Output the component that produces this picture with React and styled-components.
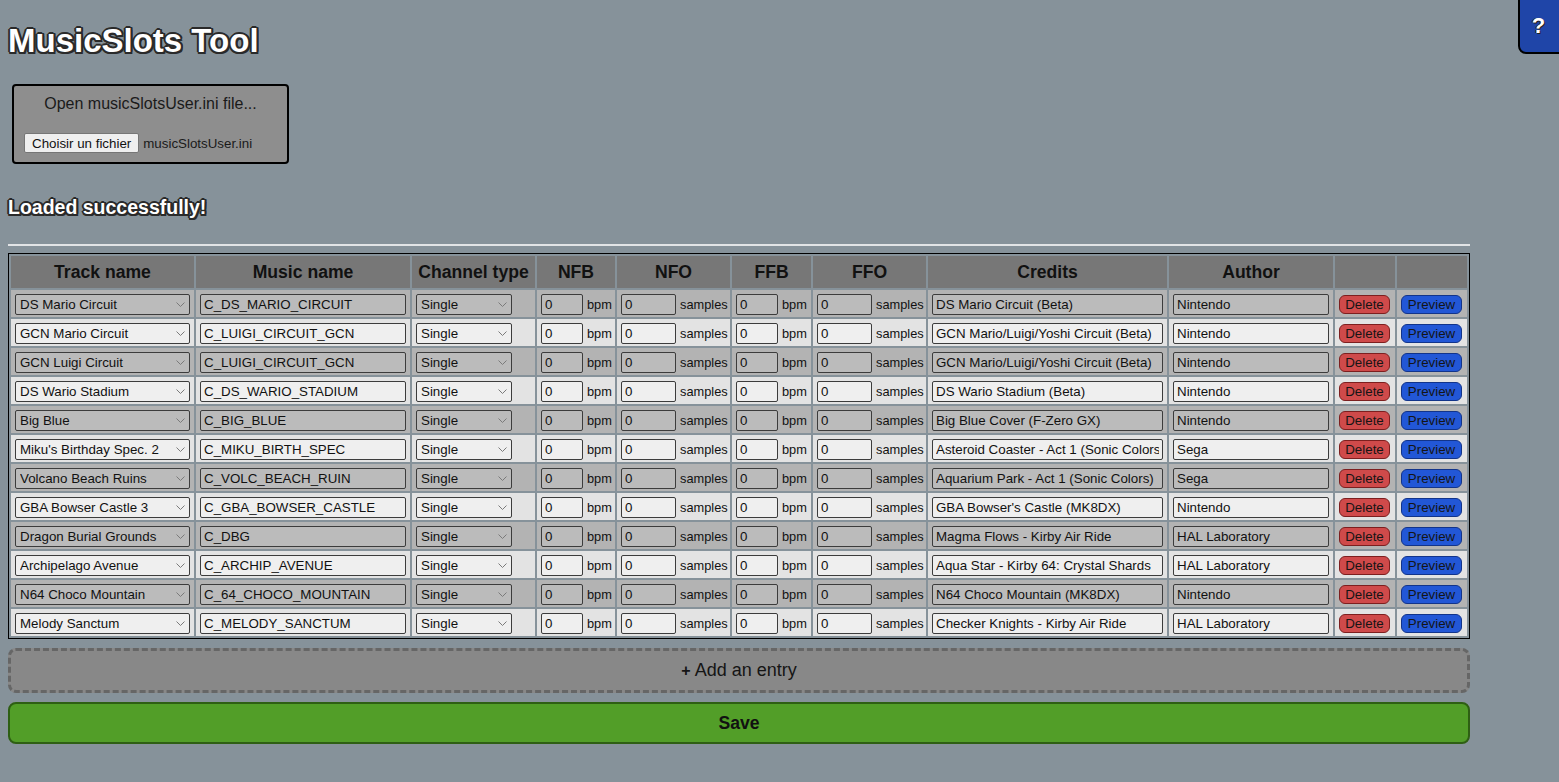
import React from 'react'
import styled, { createGlobalStyle } from 'styled-components'

const GlobalStyle = createGlobalStyle`
   html, body {
      margin: 0;
      padding: 0;
      background: #86929a;
      font-family: 'Liberation Sans', Arial, sans-serif;
      color: #111;
   }
`

const Page = styled('div')`
   width: 1462px;
   padding: 0 8px 40px 8px;
`

const outline = `
   -1px -1px 0 #2a2a2a, 1px -1px 0 #2a2a2a, -1px 1px 0 #2a2a2a, 1px 1px 0 #2a2a2a,
   2px 2px 0 #2a2a2a, 0 2px 0 #2a2a2a, 2px 0 0 #2a2a2a, -1px 2px 0 #2a2a2a, 2px -1px 0 #2a2a2a,
   -2px 0 0 #2a2a2a, 0 -2px 0 #2a2a2a
`

const Title = styled('h1')`
   margin: 0;
   padding-top: 22px;
   font-size: 33px;
   line-height: 37px;
   font-weight: bold;
   color: #fff;
   text-shadow: ${outline};
`

const HelpButton = styled('button')`
   position: fixed;
   top: -2px;
   right: -4px;
   width: 45px;
   height: 56px;
   background: #1f45a8;
   border: 2px solid #000;
   border-bottom-left-radius: 8px;
   color: #fff;
   font-family: 'Liberation Sans', Arial, sans-serif;
   font-size: 22px;
   font-weight: bold;
   padding: 0 4px 0 0;
   text-shadow: 1px 1px 0 #222, -1px 0 0 #222;
`

const OpenBox = styled('div')`
   box-sizing: border-box;
   width: 277px;
   height: 80px;
   margin: 25px 0 0 4px;
   padding: 9px 10px 9px 10px;
   background: #8e8e8e;
   border: 2px solid #000;
   border-radius: 4px;
`

const OpenLabel = styled('div')`
   text-align: center;
   font-size: 16px;
   line-height: 18px;
   color: #1a1a1a;
`

const FileRow = styled('div')`
   display: flex;
   align-items: center;
   gap: 4px;
   margin-top: 20px;
   font-size: 13.33px;
   color: #1a1a1a;
`

const FileButton = styled('button')`
   height: 20px;
   padding: 0 7px;
   background: #efefef;
   border: 1px solid #767676;
   border-radius: 2px;
   font-family: 'Liberation Sans', Arial, sans-serif;
   font-size: 13.33px;
   color: #111;
`

const Status = styled('div')`
   margin-top: 32px;
   font-size: 19.5px;
   line-height: 22px;
   font-weight: bold;
   color: #fff;
   text-shadow: ${outline};
`

const Rule = styled('hr')`
   margin: 26px 0 7px 0;
   height: 0;
   border: none;
   border-top: 2px solid #e2e4e6;
`

const Table = styled('table')`
   width: 1462px;
   table-layout: fixed;
   border: 1px solid #000;
   border-spacing: 2px;
`

const Head = styled('th')`
   height: 32px;
   padding: 0 4px;
   box-sizing: border-box;
   background: #777;
   font-size: 17.6px;
   font-weight: bold;
   color: #111;
   text-align: center;
   white-space: nowrap;
`

const Cell = styled('td')`
   height: 27px;
   box-sizing: border-box;
   padding: 4px 4px 2px 4px;
   background: ${(p) => (p.$odd ? '#b3b3b3' : '#e3e3e3')};
   font-size: 13.33px;
   color: #111;
   white-space: nowrap;
   overflow: hidden;
`

const Field = styled('input')`
   box-sizing: border-box;
   width: ${(p) => p.$w}px;
   height: 21px;
   padding: 1px 3px;
   vertical-align: middle;
   background: ${(p) => (p.$odd ? '#bbbbbb' : '#efefef')};
   border: 1px solid #3c3c3c;
   border-radius: 2px;
   font-family: 'Liberation Sans', Arial, sans-serif;
   font-size: 13.33px;
   color: #111;
`

const PickerWrap = styled('span')`
   position: relative;
   display: inline-block;
   vertical-align: middle;
`

const Picker = styled('select')`
   appearance: none;
   box-sizing: border-box;
   display: block;
   width: ${(p) => p.$w}px;
   height: 21px;
   padding: 0 4px;
   background-color: ${(p) => (p.$odd ? '#bbbbbb' : '#efefef')};
   border: 1px solid #3c3c3c;
   border-radius: 2px;
   font-family: 'Liberation Sans', Arial, sans-serif;
   font-size: 13.33px;
   color: #111;
`

const Chevron = styled('svg')`
   position: absolute;
   right: 5px;
   top: 8px;
   pointer-events: none;
`

const Unit = styled('span')`
   margin-left: 4px;
   font-size: 12.8px;
   vertical-align: middle;
`

const RowButton = styled('button')`
   box-sizing: border-box;
   width: ${(p) => p.$w}px;
   height: 19px;
   padding: 0;
   vertical-align: middle;
   background: ${(p) => (p.$kind === 'delete' ? '#cf4a4a' : '#2257d6')};
   border: 1px solid ${(p) => (p.$kind === 'delete' ? '#7c1f1f' : '#12348a')};
   border-radius: 6px;
   font-family: 'Liberation Sans', Arial, sans-serif;
   font-size: 13.33px;
   color: #151515;
`

const AddEntry = styled('div')`
   box-sizing: border-box;
   height: 45px;
   margin-top: 9px;
   display: flex;
   align-items: center;
   justify-content: center;
   gap: 4px;
   background: #888;
   border: 3px dashed #666;
   border-radius: 8px;
   font-size: 18px;
   color: #151515;
`

const Plus = styled('b')`
   font-size: 16px;
`

const SaveButton = styled('div')`
   box-sizing: border-box;
   height: 42px;
   margin-top: 9px;
   display: flex;
   align-items: center;
   justify-content: center;
   background: #529e28;
   border: 2px solid #2e5f13;
   border-radius: 8px;
   font-size: 17.6px;
   font-weight: bold;
   color: #111;
`

const columns = [183, 214, 123, 78, 113, 79, 113, 239, 164, 60, 70]
const headers = ['Track name', 'Music name', 'Channel type', 'NFB', 'NFO', 'FFB', 'FFO', 'Credits', 'Author', '', '']

const rows = [
   ['DS Mario Circuit', 'C_DS_MARIO_CIRCUIT', 'DS Mario Circuit (Beta)', 'Nintendo'],
   ['GCN Mario Circuit', 'C_LUIGI_CIRCUIT_GCN', 'GCN Mario/Luigi/Yoshi Circuit (Beta)', 'Nintendo'],
   ['GCN Luigi Circuit', 'C_LUIGI_CIRCUIT_GCN', 'GCN Mario/Luigi/Yoshi Circuit (Beta)', 'Nintendo'],
   ['DS Wario Stadium', 'C_DS_WARIO_STADIUM', 'DS Wario Stadium (Beta)', 'Nintendo'],
   ['Big Blue', 'C_BIG_BLUE', 'Big Blue Cover (F-Zero GX)', 'Nintendo'],
   ["Miku's Birthday Spec. 2", 'C_MIKU_BIRTH_SPEC', 'Asteroid Coaster - Act 1 (Sonic Colors)', 'Sega'],
   ['Volcano Beach Ruins', 'C_VOLC_BEACH_RUIN', 'Aquarium Park - Act 1 (Sonic Colors)', 'Sega'],
   ['GBA Bowser Castle 3', 'C_GBA_BOWSER_CASTLE', "GBA Bowser's Castle (MK8DX)", 'Nintendo'],
   ['Dragon Burial Grounds', 'C_DBG', 'Magma Flows - Kirby Air Ride', 'HAL Laboratory'],
   ['Archipelago Avenue', 'C_ARCHIP_AVENUE', 'Aqua Star - Kirby 64: Crystal Shards', 'HAL Laboratory'],
   ['N64 Choco Mountain', 'C_64_CHOCO_MOUNTAIN', 'N64 Choco Mountain (MK8DX)', 'Nintendo'],
   ['Melody Sanctum', 'C_MELODY_SANCTUM', 'Checker Knights - Kirby Air Ride', 'HAL Laboratory'],
]

function Dropdown({ width, odd, value }) {
   return (
      <PickerWrap>
         <Picker $w={width} $odd={odd} defaultValue={value}>
            <option>{value}</option>
         </Picker>
         <Chevron width="9" height="5" viewBox="0 0 9 5">
            <path d="M0.5 0.5 L4.5 4.5 L8.5 0.5" fill="none" stroke="#7a7a7a" strokeWidth="1" />
         </Chevron>
      </PickerWrap>
   )
}

function SlotRow({ track, music, credits, author, odd }) {
   return (
      <tr>
         <Cell $odd={odd}>
            <Dropdown width={175} odd={odd} value={track} />
         </Cell>
         <Cell $odd={odd}>
            <Field $w={206} $odd={odd} defaultValue={music} />
         </Cell>
         <Cell $odd={odd}>
            <Dropdown width={96} odd={odd} value="Single" />
         </Cell>
         <Cell $odd={odd}>
            <Field $w={42} $odd={odd} defaultValue="0" />
            <Unit>bpm</Unit>
         </Cell>
         <Cell $odd={odd}>
            <Field $w={55} $odd={odd} defaultValue="0" />
            <Unit>samples</Unit>
         </Cell>
         <Cell $odd={odd}>
            <Field $w={42} $odd={odd} defaultValue="0" />
            <Unit>bpm</Unit>
         </Cell>
         <Cell $odd={odd}>
            <Field $w={55} $odd={odd} defaultValue="0" />
            <Unit>samples</Unit>
         </Cell>
         <Cell $odd={odd}>
            <Field $w={231} $odd={odd} defaultValue={credits} />
         </Cell>
         <Cell $odd={odd}>
            <Field $w={156} $odd={odd} defaultValue={author} />
         </Cell>
         <Cell $odd={odd}>
            <RowButton $w={51} $kind="delete">Delete</RowButton>
         </Cell>
         <Cell $odd={odd}>
            <RowButton $w={61} $kind="preview">Preview</RowButton>
         </Cell>
      </tr>
   )
}

export default function App() {
   return (
      <Page>
         <GlobalStyle />
         <HelpButton type="button">?</HelpButton>
         <Title>MusicSlots Tool</Title>
         <OpenBox>
            <OpenLabel>Open musicSlotsUser.ini file...</OpenLabel>
            <FileRow>
               <FileButton type="button">Choisir un fichier</FileButton>
               <span>musicSlotsUser.ini</span>
            </FileRow>
         </OpenBox>
         <Status>Loaded successfully!</Status>
         <Rule />
         <Table>
            <colgroup>
               {columns.map((w, i) => (
                  <col key={i} style={{ width: w }} />
               ))}
            </colgroup>
            <thead>
               <tr>
                  {headers.map((h, i) => (
                     <Head key={i}>{h}</Head>
                  ))}
               </tr>
            </thead>
            <tbody>
               {rows.map((r, i) => (
                  <SlotRow key={i} track={r[0]} music={r[1]} credits={r[2]} author={r[3]} odd={i % 2 === 0} />
               ))}
            </tbody>
         </Table>
         <AddEntry>
            <Plus>+</Plus>
            <span>Add an entry</span>
         </AddEntry>
         <SaveButton>Save</SaveButton>
      </Page>
   )
}
